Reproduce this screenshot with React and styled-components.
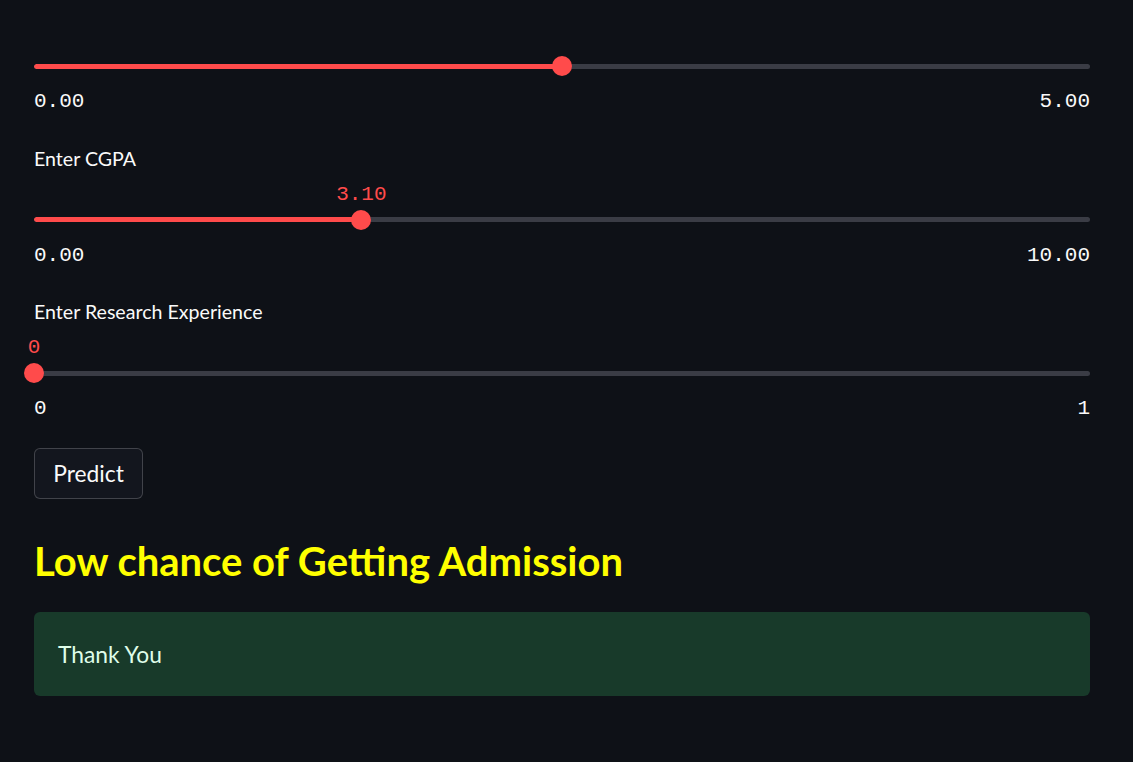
import styled, { createGlobalStyle } from 'styled-components';

const GlobalStyle = createGlobalStyle`
    html, body {
        margin: 0;
        padding: 0;
        background: #0e1117;
    }
    body {
        font-family: Lato, 'Noto Sans', sans-serif;
        color: #fafafa;
    }
`;

const Page = styled.div`
    width: 1056px;
    height: 762px;
    padding: 0 34px;
    overflow: hidden;
`;

const SliderBlock = styled.div`
    padding-top: ${(p) => (p.$first ? '56px' : '0')};
    margin-bottom: 32.5px;
`;

const Label = styled.div`
    height: 24px;
    line-height: 24px;
    font-size: 19.6px;
    margin-bottom: 39px;
`;

const Rail = styled.div`
    position: relative;
    height: 20px;
    display: flex;
    align-items: center;
`;

const Track = styled.div`
    flex: 1;
    height: 5px;
    border-radius: 3px;
    background: #3a3c45;
    overflow: hidden;
`;

const Fill = styled.div`
    height: 100%;
    background: #ff4b4b;
    border-radius: 3px;
`;

const Thumb = styled.div`
    position: absolute;
    top: 0;
    width: 20px;
    height: 20px;
    margin-left: -10px;
    border-radius: 50%;
    background: #ff4b4b;
`;

const ValueLabel = styled.div`
    position: absolute;
    top: -27px;
    line-height: 24px;
    transform: translateX(-50%);
    font-family: 'Liberation Mono', monospace;
    font-size: 21px;
    color: #ff4b4b;
    white-space: nowrap;
`;

const Ticks = styled.div`
    display: flex;
    justify-content: space-between;
    margin-top: 14px;
    line-height: 24px;
    font-family: 'Liberation Mono', monospace;
    font-size: 21px;
    color: #fafafa;
`;

const Button = styled.button`
    display: block;
    width: 109px;
    height: 51px;
    margin-top: -6px;
    padding: 0;
    border: 1px solid rgba(250, 250, 250, 0.2);
    border-radius: 6px;
    background: #13161e;
    color: #fafafa;
    font-family: Lato, 'Noto Sans', sans-serif;
    font-size: 22.8px;
`;

const Heading = styled.h2`
    margin: 37px 0 26px;
    height: 50px;
    line-height: 50px;
    font-size: 40px;
    font-weight: 700;
    color: #ffff00;
`;

const Alert = styled.div`
    height: 84px;
    display: flex;
    align-items: center;
    padding: 0 24px;
    border-radius: 6px;
    background: #183a2a;
    color: #dffde9;
    font-size: 22.8px;
`;

const Slider = ({ label, value, min, max, format, showValue = true, first }) => {
    const pct = ((value - min) / (max - min)) * 100;
    return (
        <SliderBlock $first={first}>
            {label && <Label>{label}</Label>}
            <Rail>
                <Track>
                    <Fill style={{ width: `${pct}%` }} />
                </Track>
                <Thumb style={{ left: `${pct}%` }} />
                {showValue && (
                    <ValueLabel style={{ left: `${pct}%` }}>{format(value)}</ValueLabel>
                )}
            </Rail>
            <Ticks>
                <span>{format(min)}</span>
                <span>{format(max)}</span>
            </Ticks>
        </SliderBlock>
    );
};

const two = (v) => v.toFixed(2);
const int = (v) => String(v);

export default function App() {
    return (
        <>
            <GlobalStyle />
            <Page>
                <Slider first value={2.5} min={0} max={5} format={two} showValue={false} />
                <Slider label='Enter CGPA' value={3.1} min={0} max={10} format={two} />
                <Slider label='Enter Research Experience' value={0} min={0} max={1} format={int} />
                <Button>Predict</Button>
                <Heading>Low chance of Getting Admission</Heading>
                <Alert>Thank You</Alert>
            </Page>
        </>
    );
}
